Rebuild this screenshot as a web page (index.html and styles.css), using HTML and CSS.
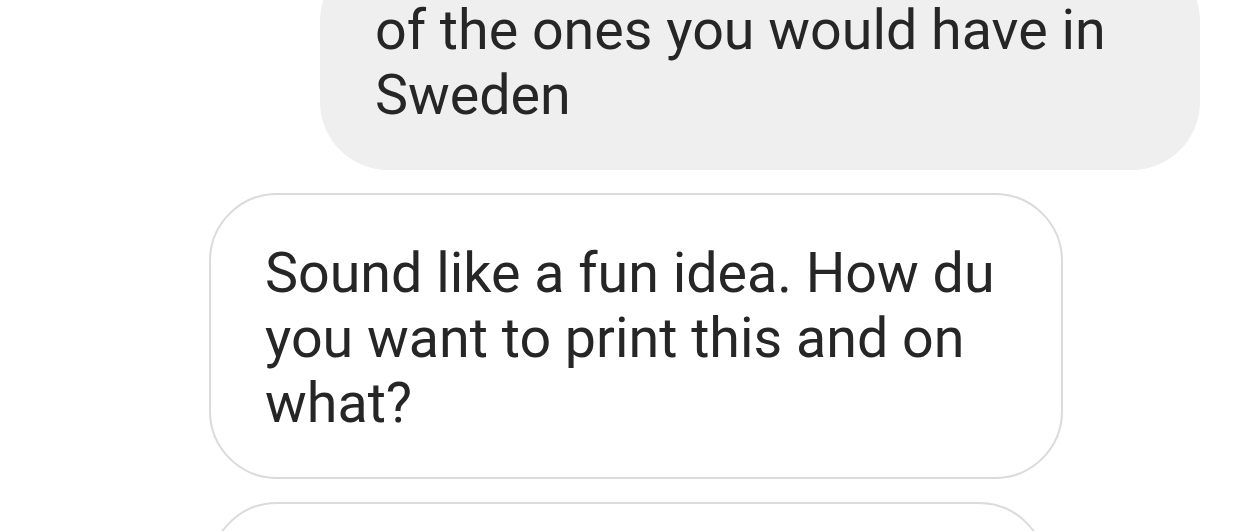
FILE: index.html
```html
<!DOCTYPE html>
<html lang="en">
<head>
<meta charset="utf-8">
<title>Chat</title>
<link rel="stylesheet" href="styles.css">
</head>
<body>
<div class="thread">
  <div class="row row-out">
    <div class="bubble bubble-out">of the ones you would have in<br>Sweden</div>
  </div>
  <div class="row row-in">
    <div class="bubble bubble-in bubble-wide">Sound like a fun idea. How du<br>you want to print this and on<br>what?</div>
  </div>
  <div class="row row-in">
    <div class="bubble bubble-in bubble-next">&nbsp;</div>
  </div>
</div>
</body>
</html>
```

FILE: styles.css
```css
html, body {
  margin: 0;
  padding: 0;
  background: #ffffff;
  overflow: hidden;
}

body {
  width: 1247px;
  height: 531px;
  font-family: Roboto, "Noto Sans", "Liberation Sans", sans-serif;
  color: #262626;
}

.thread {
  display: flex;
  flex-direction: column;
  gap: 23px;
  margin-top: -47px;
  padding: 0 47px 0 209px;
}

.row {
  display: flex;
}

.row-out {
  justify-content: flex-end;
}

.row-in {
  justify-content: flex-start;
}

.bubble {
  font-size: 55.6px;
  line-height: 65px;
  border-radius: 68px;
  box-sizing: border-box;
  white-space: nowrap;
}

.bubble-out {
  width: 880px;
  background: #efefef;
  padding: 45px 55px 42px 55px;
}

.bubble-in {
  background: #ffffff;
  border: 2px solid #dbdbdb;
  padding: 46px 53px 41px 54px;
}

.bubble-wide {
  width: 854px;
}

.bubble-next {
  width: 838px;
  height: 200px;
}
```
